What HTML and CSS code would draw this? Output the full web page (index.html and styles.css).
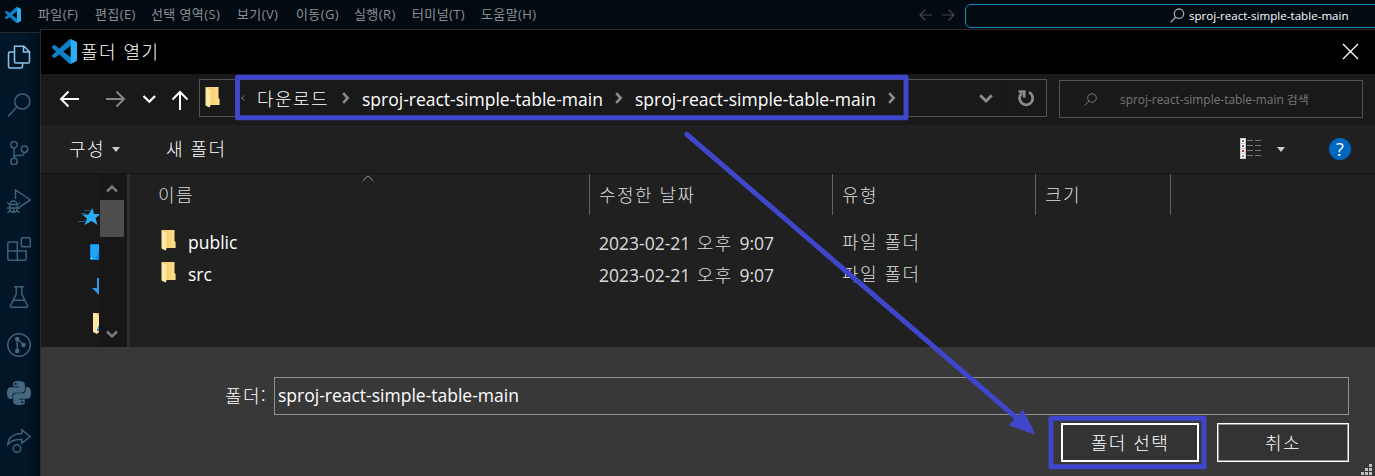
FILE: index.html
```html
<!DOCTYPE html>
<html lang="ko">
<head>
<meta charset="utf-8">
<title>폴더 열기</title>
<link rel="stylesheet" href="styles.css">
</head>
<body>
<svg class="defs" width="0" height="0">
  <defs>
    <linearGradient id="gold" x1="0" x2="1" y1="0" y2="0"><stop offset="0" stop-color="#f3c867"/><stop offset="1" stop-color="#ffe08a"/></linearGradient>
    <symbol id="vscode" viewBox="0 0 24 24">
      <path fill="#0f80c6" d="M23.15 2.587L18.21.21a1.494 1.494 0 0 0-1.705.29l-9.46 8.63-4.12-3.128a.999.999 0 0 0-1.276.057L.327 7.261A1 1 0 0 0 .326 8.74L3.899 12 .326 15.26a1 1 0 0 0 .001 1.479L1.65 17.94a.999.999 0 0 0 1.276.057l4.12-3.128 9.46 8.63a1.492 1.492 0 0 0 1.704.29l4.942-2.377A1.5 1.5 0 0 0 24 20.06V3.939a1.5 1.5 0 0 0-.85-1.352zm-5.146 14.861L10.826 12l7.178-5.448v10.896z"/>
      <path fill="#2bacf3" d="M18 .15L23.15 2.587A1.5 1.5 0 0 1 24 3.94V20.06a1.5 1.5 0 0 1-.85 1.352L18 23.85z"/>
    </symbol>
    <symbol id="folder" viewBox="0 0 15 22">
      <path fill="url(#gold)" d="M1 1H13.5V12L14.6 13V19H5L1 19z"/>
      <path fill="#ffe9a8" d="M.5 1L5.5 4V19.5L4.5 21.5L.5 19.5z"/>
    </symbol>
    <symbol id="chev" viewBox="0 0 8 12"><path d="M1.2 1.2L5.7 6L1.2 10.8" fill="none" stroke="#8c8c8c" stroke-width="2.6"/></symbol>
  </defs>
</svg>
<div class="window">
  <header class="titlebar">
    <svg class="logo-small" width="16" height="16"><use href="#vscode"/></svg>
    <nav class="menu">
      <span>파일(F)</span><span>편집(E)</span><span>선택 영역(S)</span><span>보기(V)</span><span>이동(G)</span><span>실행(R)</span><span>터미널(T)</span><span>도움말(H)</span>
    </nav>
    <svg class="history" width="36" height="14" viewBox="0 0 36 14" fill="none" stroke="#3d4952" stroke-width="1.2"><path d="M13 7H1M6.500 1.500L1 7L6.500 12.500M23 7H35M29.500 1.500L35 7L29.500 12.500"/></svg>
    <div class="command">
      <svg width="15" height="15" viewBox="0 0 15 15" fill="none" stroke="#a0a7ab" stroke-width="1.3"><circle cx="9" cy="5.700" r="4.700"/><path d="M5.700 9.200L.8 14.300"/></svg>
      <span>sproj-react-simple-table-main</span>
    </div>
  </header>
  <div class="workspace">
    <aside class="activity">
      <svg class="active" viewBox="0 0 24 24"><path d="M7.500 1.200H17L22.500 6.700V16.500Q22.500 18 21 18H9Q7.500 18 7.500 16.500zM16.500 1.500V7H22M7.500 7H3Q1.500 7 1.500 8.500V21.500Q1.500 23 3 23H14Q15.500 23 15.500 21.500V18"/></svg>
      <svg viewBox="0 0 24 24"><circle cx="15.300" cy="8.500" r="7.600"/><path d="M9.800 14L1 23.500"/></svg>
      <svg viewBox="0 0 24 24"><circle cx="7" cy="3.700" r="3.200"/><circle cx="7" cy="20.500" r="3.200"/><circle cx="17.500" cy="8.300" r="3.200"/><path d="M7 7V17.300M17.500 11.500Q17 14.500 13.500 14.500H10Q7 14.500 7 17.300"/></svg>
      <svg viewBox="0 0 24 24"><path d="M8.500 10V1L23.500 11L12.500 18M3 15.500A3.500 3.500 0 0 1 10 15.500M2.800 15.500H10.200V19Q10.200 23.300 6.500 23.300Q2.800 23.300 2.800 19zM0 13.500L2.800 15.500M13 13.500L10.200 15.500M0 19H13M.5 23.800L3 21.500M12.500 23.800L10 21.500M6.500 19V23"/></svg>
      <svg viewBox="0 0 24 24"><path d="M.8 6.500Q.8 5 2.300 5H10.300V23.200H2.300Q.8 23.200.8 21.700zM.8 14H19.200V21.700Q19.200 23.200 17.700 23.200H10.300M14.300 2.200Q14.300.8 15.700.8H22Q23.300.8 23.300 2.200V8.400Q23.300 9.800 22 9.800H15.700Q14.300 9.800 14.300 8.400z"/></svg>
      <svg viewBox="0 0 24 24"><path d="M7 1.700H17M9.200 2V9L3.500 20.500Q3 22.200 4.500 22.200H19.500Q21 22.200 20.500 20.500L14.800 9V2M6.300 15.300H17.700"/></svg>
      <svg viewBox="0 0 24 24"><circle cx="12" cy="12" r="11.300"/><path d="M10.200 6V18M10.200 6L17 12"/><g class="solid"><circle cx="10.200" cy="6" r="2.300"/><circle cx="10.200" cy="18" r="2.300"/><circle cx="16.500" cy="12" r="2.300"/></g></svg>
      <svg class="solid" viewBox="0 0 24 24"><path d="M14.25.18l.9.2.73.26.59.3.45.32.34.34.25.34.16.33.1.3.04.26.02.2-.01.13V8.5l-.05.63-.13.55-.21.46-.26.38-.3.31-.33.25-.35.19-.35.14-.33.1-.3.07-.26.04-.21.02H8.77l-.69.05-.59.14-.5.22-.41.27-.33.32-.27.35-.2.36-.15.37-.1.35-.07.32-.04.27-.02.21v3.06H3.17l-.21-.03-.28-.07-.32-.12-.35-.18-.36-.26-.36-.36-.35-.46-.32-.59-.28-.73-.21-.88-.14-1.05-.05-1.23.06-1.22.16-1.04.24-.87.32-.71.36-.57.4-.44.42-.33.42-.24.4-.16.36-.1.32-.05.24-.01h.16l.06.01h8.16v-.83H6.18l-.01-2.75-.02-.37.05-.34.11-.31.17-.28.25-.26.31-.23.38-.2.44-.18.51-.15.58-.12.64-.1.71-.06.77-.04.84-.02 1.27.05zm-6.3 1.98l-.23.33-.08.41.08.41.23.34.33.22.41.09.41-.09.33-.22.23-.34.08-.41-.08-.41-.23-.33-.33-.22-.41-.09-.41.09zm13.09 3.95l.28.06.32.12.35.18.36.27.36.35.35.47.32.59.28.73.21.88.14 1.04.05 1.23-.06 1.23-.16 1.04-.24.86-.32.71-.36.57-.4.45-.42.33-.42.24-.4.16-.36.09-.32.05-.24.02-.16-.01h-8.22v.82h5.84l.01 2.76.02.36-.05.34-.11.31-.17.29-.25.25-.31.24-.38.2-.44.17-.51.15-.58.13-.64.09-.71.07-.77.04-.84.01-1.27-.04-1.07-.14-.9-.2-.73-.25-.59-.3-.45-.33-.34-.34-.25-.34-.16-.33-.1-.3-.04-.25-.02-.2.01-.13v-5.34l.05-.64.13-.54.21-.46.26-.38.3-.32.33-.24.35-.2.35-.14.33-.1.3-.06.26-.04.21-.02.13-.01h5.84l.69-.05.59-.14.5-.21.41-.28.33-.32.27-.35.2-.36.15-.36.1-.35.07-.32.04-.28.02-.21V6.07h2.09l.14.01zm-6.47 14.25l-.23.33-.08.41.08.41.23.33.33.23.41.08.41-.08.33-.23.23-.33.08-.41-.08-.41-.23-.33-.33-.23-.41-.08-.41.08z"/></svg>
      <svg viewBox="0 0 24 24"><path d="M.8 15.500Q1.500 5 14.800 4.500V.8L23.200 7.500L14.800 14.200V10.500Q5 10 .8 15.500z"/><circle cx="10" cy="19.500" r="3.800"/></svg>
    </aside>
    <section class="dialog">
      <div class="dialog-title">
        <svg width="25" height="25"><use href="#vscode"/></svg>
        <span class="ko">폴더 열기</span>
        <svg class="close" width="17" height="17" viewBox="0 0 17 17" stroke="#fff" stroke-width="1.300"><path d="M1 1L16 16M16 1L1 16"/></svg>
      </div>
      <div class="navrow">
        <svg class="arrows" width="132" height="22" viewBox="0 0 132 22" fill="none" stroke="#fff" stroke-width="2">
          <path d="M21 11H3M10.500 3.500L3 11L10.500 18.500"/>
          <path stroke="#858585" d="M48 11H66M58.500 3.500L66 11L58.500 18.500"/>
          <path stroke-width="2.200" d="M85.500 8L91.300 13.800L97.100 8"/>
          <path d="M122 22V4M114.500 11.500L122 4L129.500 11.500"/>
        </svg>
        <div class="address">
          <svg class="fold" width="15" height="22"><use href="#folder"/></svg>
          <svg class="laquo" width="6" height="6" viewBox="0 0 6 6" fill="none" stroke="#888"><path d="M5.300 .5L2.500 3L5.300 5.500"/></svg>
          <span class="crumb ko">다운로드</span>
          <svg width="8" height="12"><use href="#chev"/></svg>
          <span class="crumb latin">sproj-react-simple-table-main</span>
          <svg width="8" height="12"><use href="#chev"/></svg>
          <span class="crumb latin">sproj-react-simple-table-main</span>
          <svg width="8" height="12"><use href="#chev"/></svg>
          <svg class="drop" width="14" height="9" viewBox="0 0 14 9" fill="none" stroke="#8c8c8c" stroke-width="2.800"><path d="M1.200 1.300L7 7L12.800 1.300"/></svg>
          <div class="refresh"><svg width="17" height="18" viewBox="0 0 17 18" fill="none" stroke="#8c8c8c" stroke-width="2.700"><path d="M11 3.300A6.600 6.600 0 1 1 4 4.100M.5 2.500H6.200V8.500"/></svg></div>
        </div>
        <div class="search">
          <svg width="13" height="13" viewBox="0 0 13 13" fill="none" stroke="#777"><circle cx="8" cy="5" r="4.300"/><path d="M4.900 8L.5 12.500"/></svg>
          <span>sproj-react-simple-table-main 검색</span>
        </div>
      </div>
      <div class="toolbar">
        <span class="organize ko">구성</span>
        <i class="caret"></i>
        <span class="newfolder ko">새 폴더</span>
        <svg class="view" width="22" height="22" viewBox="0 0 22 22">
          <path fill="#c9c9c9" d="M0 0H6V21H0z"/><path fill="#fff" d="M1 1H5V5H1zM1 6H5V10H1zM1 11H5V15H1zM1 16H5V20H1z"/>
          <path fill="#557f91" d="M2 2H4V4H2z"/><path fill="#70658f" d="M2 7H4V9H2z"/><path fill="#b8271c" d="M2 12H4V14H2z"/><path fill="#84945c" d="M2 17H4V19H2z"/>
          <path stroke="#777" d="M7 2.500H13M15 2.500H21M7 7.500H13M15 7.500H21M7 12.500H13M15 12.500H21M7 17.500H13M15 17.500H21"/>
        </svg>
        <i class="caret view-caret"></i>
        <span class="help">?</span>
      </div>
      <div class="browser">
        <div class="tree">
          <svg width="22" height="18" viewBox="0 0 22 18"><path fill="#2aa9f5" d="M15.500 0L17 6H24L18.500 10L20.500 17L14.500 13L7.500 17L10 10.500L5 6.500H11.500z"/><path stroke="#1c5e8a" d="M7 2.500H13M4 5.500H9M1 13.500H8"/></svg>
          <svg width="9" height="16" viewBox="0 0 9 16"><path fill="#20a5fa" stroke="#0d87d5" d="M.5.500H12V15.500H.5z"/><path fill="#078cf0" d="M9 7V15H5z"/><path fill="#fff" d="M1 14H2V15H1z"/></svg>
          <svg width="7" height="17" viewBox="0 0 7 17"><path fill="#2f98ec" d="M5 0H7V17L0 10H5z"/></svg>
          <svg width="6" height="21" viewBox="0 0 6 21"><path fill="#ffe6a0" d="M0 0H6V19L4 21L0 19z"/><path fill="#edbf58" d="M2 0H6V3z"/><path fill="#1784d8" d="M4 17L6 12V18H4z"/></svg>
        </div>
        <div class="scrollbar">
          <svg width="12" height="9" viewBox="0 0 12 9" fill="none" stroke="#777" stroke-width="2.600"><path d="M1 7.500L6 2.500L11 7.500"/></svg>
          <div class="thumb"></div>
          <svg width="12" height="9" viewBox="0 0 12 9" fill="none" stroke="#777" stroke-width="2.600"><path d="M1 1.500L6 6.500L11 1.500"/></svg>
        </div>
        <div class="files">
          <div class="row head ko"><span>이름<svg class="sort" width="12" height="7" viewBox="0 0 12 7" fill="none" stroke="#999"><path d="M.7 6L6 .8L11.300 6"/></svg></span><span>수정한 날짜</span><span>유형</span><span>크기</span></div>
          <div class="row"><span class="name"><svg width="15" height="22"><use href="#folder"/></svg>public</span><span class="date">2023-02-21 <span class="ko">오후</span> 9:07</span><span class="ko">파일 폴더</span></div>
          <div class="row"><span class="name"><svg width="15" height="22"><use href="#folder"/></svg>src</span><span class="date">2023-02-21 <span class="ko">오후</span> 9:07</span><span class="ko">파일 폴더</span></div>
        </div>
      </div>
      <footer class="footer">
        <div class="field"><label class="ko">폴더:</label><div class="input latin">sproj-react-simple-table-main</div></div>
        <div class="buttons"><button class="primary ko">폴더 선택</button><button class="ko">취소</button></div>
        <svg class="grip" width="11" height="11" viewBox="0 0 11 11"><path fill="#c2c2c2" d="M8 0H11V3H8zM4 4H7V7H4zM8 4H11V7H8zM0 8H3V11H0zM4 8H7V11H4zM8 8H11V11H8z"/></svg>
      </footer>
    </section>
  </div>
  <svg class="annotation" width="1375" height="476" fill="none" stroke="#4046ca" stroke-width="5" stroke-linejoin="round" stroke-linecap="round">
    <rect x="237.500" y="77.200" width="668.500" height="40.600"/>
    <rect x="1051" y="418.200" width="153" height="48.600"/>
    <path d="M687 134.500L1018 419"/>
    <path d="M1035.500 434.500L1023 409.500L1009 425.500z" fill="#4046ca" stroke="none"/>
  </svg>
</div>
</body>
</html>
```
FILE: styles.css
```css
* { box-sizing: border-box; }
body { margin: 0; background: #000b14; font-family: "Open Sans", "Noto Sans CJK KR", sans-serif; }
svg { display: block; flex: none; }
.defs { position: absolute; }
.window { position: relative; width: 1375px; height: 476px; overflow: hidden; white-space: nowrap; color: #fff; }
.ko { font-family: "Noto Sans CJK KR", sans-serif; font-size: 18px; font-weight: 300; letter-spacing: 1.45px; }
.titlebar { display: flex; align-items: center; height: 29px; background: #010b11; }
.logo-small { margin: 1px 0 0 5px; }
.menu { display: grid; grid-template-columns: 57px 56px 86px 59px 58px 58px 69px 60px; margin-left: 17px; font-size: 13px; line-height: 29px; letter-spacing: .4px; color: #8a9197; }
.history { margin-left: 378px; margin-top: 1px; }
.command { display: flex; align-items: center; width: 420px; height: 24px; margin: 2px 0 0 10px; padding-left: 204px; gap: 4px; border: 1px solid #1789b4; border-radius: 6px; font-size: 11.6px; flex: none; }
.workspace { display: flex; height: 447px; }
.activity { width: 40px; margin-top: 3px; padding: 12px 0 0 7px; border-top: 1px solid #26292c; background: linear-gradient(90deg, #011627 65%, #010f1b); display: flex; flex-direction: column; gap: 24px; flex: none; }
.activity svg { width: 24px; height: 24px; fill: none; stroke: #3f6079; stroke-width: 1.5; }
.activity .active { stroke: #8ac5ee; }
.activity .solid { fill: #456780; stroke: none; }
.dialog { flex: 1; border-left: 1px solid #2b2e30; border-top: 1px solid #2b2b2b; background: #202020; display: flex; flex-direction: column; font-size: 17.5px; }
.dialog-title { display: flex; align-items: center; height: 44px; padding: 0 16px 2px 11px; gap: 4px; background: #000; }
.dialog-title .close { margin-left: auto; }
.navrow { display: flex; height: 51px; background: #191919; padding: 5px 0 0 17px; }
.arrows { margin-top: 9px; }
.address { display: flex; align-items: center; width: 848px; height: 38px; margin-left: 9px; padding-left: 5px; border: 1px solid #535353; }
.laquo { margin: 0 12px 0 19px; }
.fold { margin-top: -2px; }
.crumb { width: 85px; margin-top: -1px; }
.crumb.latin { width: 240px; margin: 2px 13px 0 12px; }
.drop { margin-left: 83px; }
.refresh { display: flex; align-items: center; justify-content: center; width: 41px; height: 36px; margin-left: auto; border-left: 1px solid #151515; }
.search { display: flex; align-items: center; width: 304px; height: 38px; margin: 1px 0 0 12px; padding-left: 24px; gap: 23px; border: 1px solid #535353; color: #777; font-size: 11.9px; }
.search span { margin-top: -2px; }
.toolbar { display: flex; align-items: center; height: 49px; border-bottom: 1px solid #151515; padding-left: 28px; }
.organize { width: 43px; }
.organize, .newfolder { margin-top: -2px; }
.caret { width: 0; height: 0; border: 4.5px solid transparent; border-top: 5px solid #ccc; border-bottom: 0; }
.newfolder { margin-left: 46px; width: 60px; }
.view { margin-left: 1014px; margin-top: -1px; }
.view-caret { margin-left: 15px; }
.help { display: grid; place-items: center; width: 22px; height: 22px; margin: -1px 0 0 44px; border-radius: 50%; background: #0067c0; font-size: 18px; line-height: 22px; font-weight: 500; }
.browser { display: flex; height: 173px; }
.tree { display: flex; flex-direction: column; align-items: flex-end; width: 58px; height: 173px; padding-top: 34px; gap: 18px; background: #191919; overflow: hidden; }
.scrollbar { display: flex; flex-direction: column; align-items: center; width: 28px; padding: 10px 3px 8px 1px; background: #171717; }
.thumb { width: 24px; height: 37px; margin: 7px 0 auto; background: #4d4d4d; }
.files { flex: 1; border-left: 3px solid #2d2d2d; }
.row { display: grid; grid-template-columns: 460px 243px 203px 135px; height: 32px; line-height: 32px; color: #ddd; }
.row > span { padding-left: 9px; }
.row > span:first-child { padding-left: 28px; }
.row > span.ko { line-height: 30px; }
.date .ko { margin: 0 2px 0 2px; }
.head { height: 40px; line-height: 41px; margin-bottom: 12px; }
.head > span { position: relative; border-right: 1px solid #636363; }
.sort { position: absolute; left: 232px; top: 1px; }
.row > .name:first-child { display: flex; gap: 12px; padding-left: 31px; color: #fff; }
.name svg { margin-top: 3px; }
.footer { position: relative; height: 129px; padding: 30px 26px 0 0; background: #383838; }
.field { display: flex; }
.field label { width: 233px; padding-left: 184px; line-height: 37px; }
.input { flex: 1; height: 38px; padding-left: 3px; border: 1px solid #929292; line-height: 34px; }
.buttons { display: flex; justify-content: flex-end; gap: 18px; margin-top: 8px; }
button { width: 132px; height: 39px; padding: 0; border: 1px solid #fff; outline: 1px solid #929292; outline-offset: -2px; background: #333; color: #fff; line-height: 35px; }
.primary { width: 138px; border-width: 2px; outline: 0; }
.grip { position: absolute; right: 3px; bottom: 1px; }
.annotation { position: absolute; inset: 0; }
```
